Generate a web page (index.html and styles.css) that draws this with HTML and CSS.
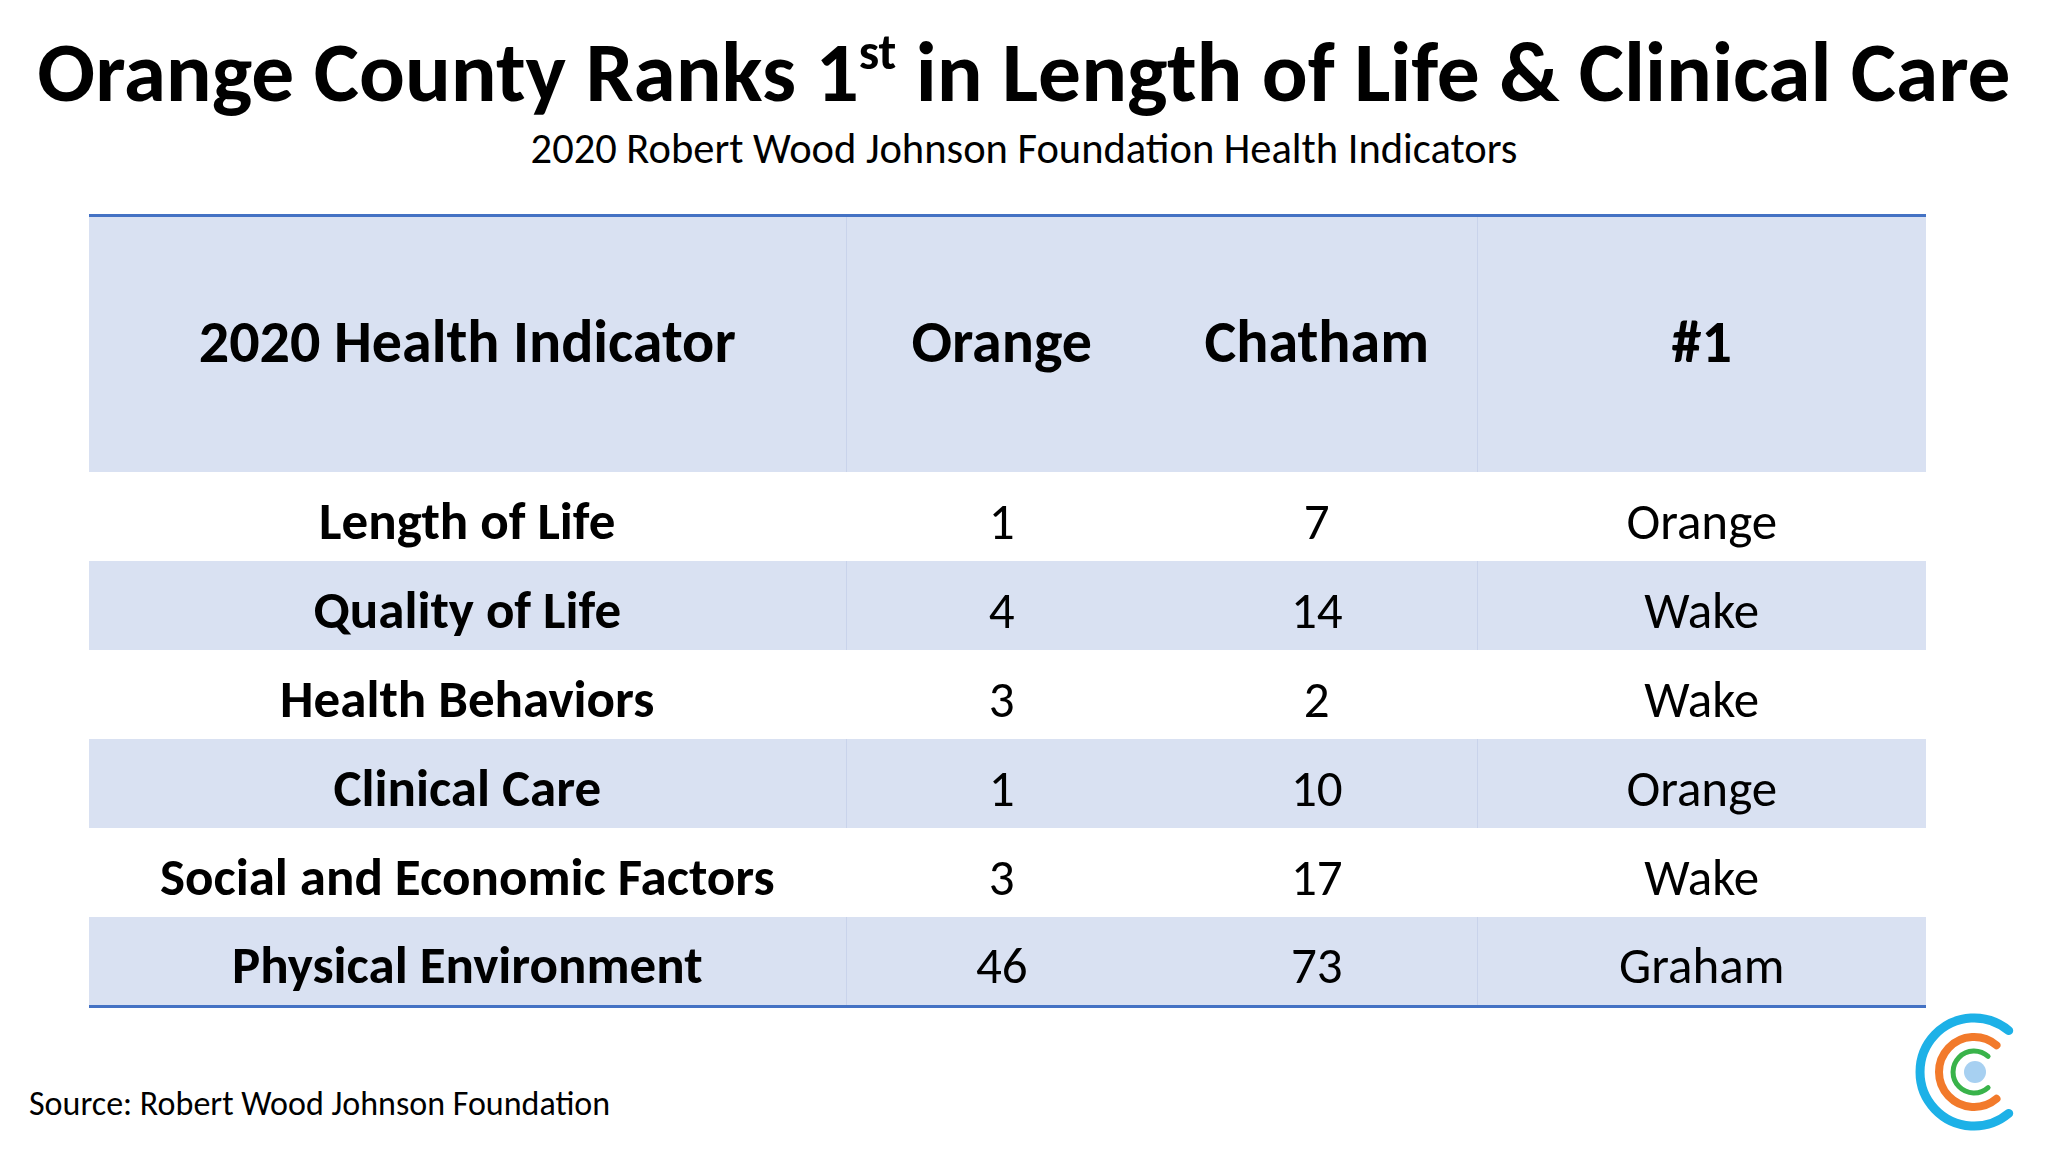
FILE: index.html
```html
<!DOCTYPE html>
<html lang="en">
<head>
<meta charset="utf-8">
<title>Orange County Ranks 1st</title>
<link rel="stylesheet" href="styles.css">
</head>
<body>
<div class="slide">
  <header class="head">
    <h1 class="title">Orange County Ranks 1<sup class="ord">st</sup> in Length of Life &amp; Clinical Care</h1>
    <p class="subtitle">2020 Robert Wood Johnson Foundation Health Indicators</p>
  </header>
  <table class="ranks">
    <colgroup>
      <col class="c-ind"><col class="c-or"><col class="c-ch"><col class="c-top">
    </colgroup>
    <thead>
      <tr class="hrow">
        <th class="div-r">2020 Health Indicator</th>
        <th>Orange</th>
        <th class="div-r">Chatham</th>
        <th>#1</th>
      </tr>
    </thead>
    <tbody>
      <tr class="plain"><th class="div-r">Length of Life</th><td>1</td><td class="div-r">7</td><td>Orange</td></tr>
      <tr class="alt"><th class="div-r">Quality of Life</th><td>4</td><td class="div-r">14</td><td>Wake</td></tr>
      <tr class="plain"><th class="div-r">Health Behaviors</th><td>3</td><td class="div-r">2</td><td>Wake</td></tr>
      <tr class="alt"><th class="div-r">Clinical Care</th><td>1</td><td class="div-r">10</td><td>Orange</td></tr>
      <tr class="plain"><th class="div-r">Social and Economic Factors</th><td>3</td><td class="div-r">17</td><td>Wake</td></tr>
      <tr class="alt"><th class="div-r">Physical Environment</th><td>46</td><td class="div-r">73</td><td>Graham</td></tr>
    </tbody>
  </table>
  <footer class="foot">
    <p class="source">Source: Robert Wood Johnson Foundation</p>
    <svg class="logo" viewBox="0 0 122 122" width="122" height="122" aria-hidden="true">
      <path d="M95.7 19.6 A54 54 0 1 0 95.7 102.4" fill="none" stroke="#1db1e7" stroke-width="9" stroke-linecap="round"/>
      <path d="M83.5 34.2 A35 35 0 1 0 83.5 87.8" fill="none" stroke="#f27a2b" stroke-width="8" stroke-linecap="round"/>
      <path d="M75.1 45.4 A21 21 0 1 0 75.1 76.6" fill="none" stroke="#39b34a" stroke-width="5" stroke-linecap="round"/>
      <circle cx="62" cy="61" r="11" fill="#a7d0f1"/>
    </svg>
  </footer>
</div>
</body>
</html>
```

FILE: styles.css
```css
html, body {
  margin: 0;
  padding: 0;
  background: #ffffff;
}

body {
  font-family: Carlito, Calibri, Lato, "Liberation Sans", sans-serif;
  color: #000000;
}

.slide {
  width: 2048px;
  height: 1152px;
  display: flex;
  flex-direction: column;
  overflow: hidden;
}

.head {
  display: flex;
  flex-direction: column;
  align-items: center;
  padding-top: 30px;
}

.title {
  margin: 0;
  font-size: 85.5px;
  line-height: 1;
  font-weight: 700;
  white-space: nowrap;
}

.ord {
  font-size: 0.6em;
  line-height: 0;
  vertical-align: 0.62em;
}

.subtitle {
  margin: 12px 0 0;
  font-size: 42.5px;
  line-height: 1;
  font-weight: 400;
}

.ranks {
  margin: 44px 0 0 89px;
  width: 1837px;
  border-collapse: collapse;
  table-layout: fixed;
  border-top: 3px solid #4472c4;
  border-bottom: 3px solid #4472c4;
}

.c-ind { width: 757px; }
.c-or { width: 311px; }
.c-ch { width: 320px; }
.c-top { width: 449px; }

.ranks th,
.ranks td {
  padding: 10px 0 0;
  text-align: center;
  vertical-align: middle;
  line-height: 1;
}

.hrow th {
  height: 249px;
  padding: 0 0 6px;
  font-size: 60px;
  font-weight: 700;
  background: #d9e1f2;
}

.ranks tbody tr {
  height: 89px;
}

.ranks tbody th {
  font-size: 53px;
  font-weight: 700;
}

.ranks tbody td {
  font-size: 51px;
  font-weight: 400;
}

.alt {
  background: #d9e1f2;
}

.plain {
  background: #ffffff;
}

.hrow .div-r,
.alt .div-r {
  border-right: 1px solid #c9d3eb;
}

.plain .div-r {
  border-right: 1px solid #ffffff;
}

.foot {
  display: flex;
  justify-content: space-between;
  align-items: flex-start;
  padding: 3px 13px 0 29px;
}

.source {
  margin: 76px 0 0;
  font-size: 34px;
  line-height: 1;
  font-weight: 400;
}

.logo {
  display: block;
  flex: none;
}
```
